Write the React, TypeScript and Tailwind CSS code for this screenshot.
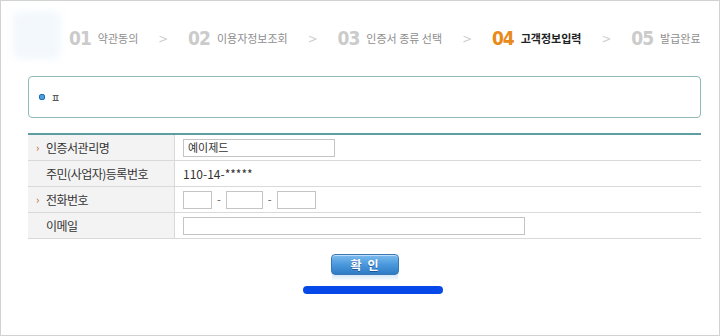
const KR = { fontFamily: '"Noto Sans CJK KR", "Noto Sans", sans-serif' };
const NUM = { fontFamily: '"DejaVu Sans Condensed", "DejaVu Sans", sans-serif' };

const steps = [
  { no: "01", label: "약관동의" },
  { no: "02", label: "이용자정보조회" },
  { no: "03", label: "인증서 종류 선택" },
  { no: "04", label: "고객정보입력", active: true },
  { no: "05", label: "발급완료" },
];

function StepBar() {
  return (
    <div className="flex h-[75px] items-center pl-[68px]">
      {steps.map((s, i) => (
        <div key={s.no} className="flex items-center">
          {i > 0 && <span className="mx-[20px] text-[13px] text-[#cfcfcf]" style={NUM}>&gt;</span>}
          <span
            className={`text-[19px] font-bold leading-none tracking-[-1px] ${s.active ? "text-[#e8891a]" : "text-[#cbcbcb]"}`}
            style={NUM}
          >
            {s.no}
          </span>
          <span
            className={`ml-[7px] text-[11px] leading-none ${s.active ? "font-bold text-[#222]" : "text-[#8e8e8e]"}`}
            style={KR}
          >
            {s.label}
          </span>
        </div>
      ))}
    </div>
  );
}

function Row({ label, req, children }: { label: string; req?: boolean; children: React.ReactNode }) {
  return (
    <div className="flex h-[26px] border-b border-[#d9d9d9]">
      <div className="flex w-[147px] items-center border-r border-[#d9d9d9] bg-[#f3f3f3] pl-[8px]">
        <span className="w-[10px] text-[11px] text-[#c0601a]">{req ? "›" : ""}</span>
        <span className="text-[12px] tracking-[-0.5px] text-[#333]" style={KR}>{label}</span>
      </div>
      <div className="flex flex-1 items-center pl-[8px] text-[11px] text-[#333]" style={KR}>
        {children}
      </div>
    </div>
  );
}

function Box({ w, value }: { w: string; value?: string }) {
  return (
    <div className={`flex h-[18px] items-center border border-[#c4c4c4] bg-white pl-[4px] text-[11px] text-[#333] ${w}`}>
      {value}
    </div>
  );
}

export default function App() {
  return (
    <div className="relative h-[336px] w-[720px] overflow-hidden border border-[#d2d2d2] bg-white" style={KR}>
      <div className="absolute left-[12px] top-[10px] h-[48px] w-[48px] rounded-[6px] bg-[#f3f8fd] blur-[4px]" />
      <div className="relative">
        <StepBar />
        <div className="ml-[27px] w-[673px]">
          <div className="flex h-[42px] items-center rounded-[4px] border border-[#8fb8b8] pl-[10px]">
            <span className="h-[6px] w-[6px] rounded-[2px] border border-[#1f6fb0] bg-[#4aa0e0]" />
            <span className="ml-[6px] text-[10px] text-[#333]">ㅍ</span>
          </div>
          <div className="mt-[15px] border-t-2 border-[#5f9ea0]">
            <Row label="인증서관리명" req>
              <Box w="w-[152px]" value="예이제드" />
            </Row>
            <Row label="주민(사업자)등록번호">
              <span className="text-[12px]">110-14-*****</span>
            </Row>
            <Row label="전화번호" req>
              <Box w="w-[29px]" />
              <span className="mx-[5px] text-[#555]">-</span>
              <Box w="w-[37px]" />
              <span className="mx-[5px] text-[#555]">-</span>
              <Box w="w-[39px]" />
            </Row>
            <Row label="이메일">
              <Box w="w-[342px]" />
            </Row>
          </div>
        </div>
        <div className="mt-[15px] flex flex-col items-center">
          <div className="ml-[9px] flex flex-col items-center">
            <div className="flex h-[21px] w-[68px] items-center justify-center rounded-[4px] border border-[#3a78b5] bg-gradient-to-b from-[#7cbcef] via-[#4a98dc] to-[#2f7cc6] text-[12px] font-bold tracking-[6px] text-white shadow-[inset_0_1px_0_rgba(255,255,255,0.5)] [text-shadow:0_1px_0_rgba(0,40,100,0.5)]">
              <span className="pl-[6px]">확인</span>
            </div>
            <div className="h-[6px] w-[66px] bg-gradient-to-b from-[#d6e9f8] to-white" />
          </div>
          <div className="ml-[26px] mt-[5px] h-[8px] w-[140px] rounded-full bg-[#0648e8]" />
        </div>
      </div>
    </div>
  );
}
